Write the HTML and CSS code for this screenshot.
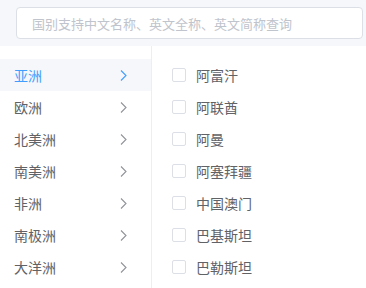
FILE: index.html
```html
<!DOCTYPE html>
<html>
<head>
    <meta charset="utf-8" />
    <title>国别选择</title>
    <link rel="stylesheet" href="styles.css">
</head>
<body>
    <section class="searchbar">
        <input class="searchinput" type="text" placeholder="国别支持中文名称、英文全称、英文简称查询" />
    </section>
    <section class="picker">
        <ul class="regions">
            <li class="region active">亚洲<svg class="arrow" width="7" height="11" viewBox="0 0 7 11"><polyline points="1,0.5 6,5.5 1,10.5" /></svg></li>
            <li class="region">欧洲<svg class="arrow" width="7" height="11" viewBox="0 0 7 11"><polyline points="1,0.5 6,5.5 1,10.5" /></svg></li>
            <li class="region">北美洲<svg class="arrow" width="7" height="11" viewBox="0 0 7 11"><polyline points="1,0.5 6,5.5 1,10.5" /></svg></li>
            <li class="region">南美洲<svg class="arrow" width="7" height="11" viewBox="0 0 7 11"><polyline points="1,0.5 6,5.5 1,10.5" /></svg></li>
            <li class="region">非洲<svg class="arrow" width="7" height="11" viewBox="0 0 7 11"><polyline points="1,0.5 6,5.5 1,10.5" /></svg></li>
            <li class="region">南极洲<svg class="arrow" width="7" height="11" viewBox="0 0 7 11"><polyline points="1,0.5 6,5.5 1,10.5" /></svg></li>
            <li class="region">大洋洲<svg class="arrow" width="7" height="11" viewBox="0 0 7 11"><polyline points="1,0.5 6,5.5 1,10.5" /></svg></li>
        </ul>
        <ul class="countries">
            <li class="country"><span class="box"></span>阿富汗</li>
            <li class="country"><span class="box"></span>阿联酋</li>
            <li class="country"><span class="box"></span>阿曼</li>
            <li class="country"><span class="box"></span>阿塞拜疆</li>
            <li class="country"><span class="box"></span>中国澳门</li>
            <li class="country"><span class="box"></span>巴基斯坦</li>
            <li class="country"><span class="box"></span>巴勒斯坦</li>
        </ul>
    </section>
</body>
</html>
```

FILE: styles.css
```css
* {
    padding: 0;
    margin: 0;
    box-sizing: border-box;
}
body {
    background: #fff;
    font-family: "Noto Sans CJK SC", "Noto Sans", sans-serif;
    color: #606266;
    overflow: hidden;
}
.searchbar {
    height: 46px;
    padding: 7px 3px 0 16px;
    background: #f5f7fa;
}
.searchinput {
    display: block;
    width: 100%;
    height: 32px;
    padding: 0 15px;
    border: 1px solid #dcdfe6;
    border-radius: 4px;
    background: #fff;
    font-family: inherit;
    font-size: 13px;
    outline: none;
}
.searchinput::placeholder {
    color: #c0c4cc;
}
.picker {
    display: flex;
    height: 242px;
}
.regions {
    list-style: none;
    width: 152px;
    padding-top: 13px;
    border-right: 1px solid #ebeef5;
}
.region {
    display: flex;
    align-items: center;
    justify-content: space-between;
    height: 32px;
    padding: 0 24px 0 14px;
    font-size: 14px;
    color: #606266;
}
.region.active {
    background: #f5f7fa;
    color: #409eff;
}
.arrow {
    fill: none;
    stroke: #909399;
    stroke-width: 1.1;
}
.region.active .arrow {
    stroke: #409eff;
}
.countries {
    list-style: none;
    padding: 13px 0 0 20px;
}
.country {
    display: flex;
    align-items: center;
    height: 32px;
    font-size: 14px;
    color: #606266;
}
.box {
    width: 14px;
    height: 14px;
    margin-right: 10px;
    border: 1px solid #dcdfe6;
    border-radius: 2px;
    background: #fff;
}
```
